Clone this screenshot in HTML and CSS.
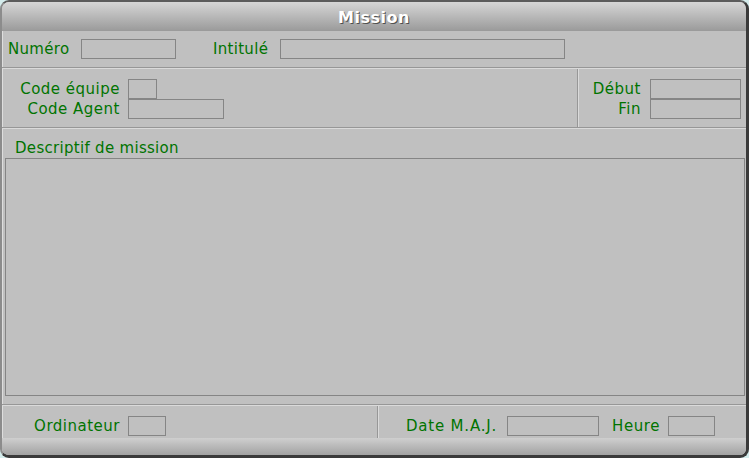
FILE: index.html
```html
<!DOCTYPE html>
<html lang="fr">
<head>
<meta charset="utf-8">
<title>Mission</title>
<link rel="stylesheet" href="styles.css">
</head>
<body>
<div class="window">
  <div class="titlebar">Mission</div>
  <div class="row1">
    <span class="lbl lbl-num">Numéro</span>
    <span class="field f-num"></span>
    <span class="lbl lbl-int">Intitulé</span>
    <span class="field f-int"></span>
  </div>
  <div class="sep"></div>
  <div class="sec2">
    <div class="sec2-left">
      <div class="frow"><span class="lbl rl w118">Code équipe</span><span class="field f-eq"></span></div>
      <div class="frow"><span class="lbl rl w118">Code Agent</span><span class="field f-ag"></span></div>
    </div>
    <div class="vsep"></div>
    <div class="sec2-right">
      <div class="frow"><span class="lbl rl w62">Début</span><span class="field f-date"></span></div>
      <div class="frow"><span class="lbl rl w62">Fin</span><span class="field f-date"></span></div>
    </div>
  </div>
  <div class="sep"></div>
  <div class="sec3">
    <div class="lbl desc-lbl">Descriptif de mission</div>
    <div class="field textarea"></div>
  </div>
  <div class="sep"></div>
  <div class="footer">
    <div class="foot-left">
      <span class="lbl rl w118">Ordinateur</span><span class="field f-ord"></span>
    </div>
    <div class="vsep"></div>
    <div class="foot-right">
      <span class="lbl lbl-maj">Date M.A.J.</span><span class="field f-maj"></span>
      <span class="lbl lbl-heure">Heure</span><span class="field f-heure"></span>
    </div>
  </div>
  <div class="bottombar"></div>
</div>
</body>
</html>
```
FILE: styles.css
```css
html, body {
  margin: 0;
  padding: 0;
  background: #d4ecec;
}
body {
  font-family: "DejaVu Sans", Verdana, sans-serif;
  font-size: 15px;
}
.window {
  box-sizing: border-box;
  width: 749px;
  height: 458px;
  background: #c0c0c0;
  border-top: 2px solid #5c5c5c;
  border-left: 2px solid #8c8c8c;
  border-right: 3px solid #3a3a3a;
  border-bottom: 3px solid #3a3a3a;
  border-radius: 9px;
  overflow: hidden;
  display: flex;
  flex-direction: column;
  box-shadow: inset 1px 0 0 #dedede;
}
.titlebar {
  height: 29px;
  flex: none;
  background: linear-gradient(#d6d6d6, #9a9a9a);
  color: #ffffff;
  font-weight: bold;
  font-size: 16px;
  text-align: center;
  line-height: 31px;
  letter-spacing: 0.5px;
  text-shadow: 1px 1px 0 #505050;
}
.lbl {
  color: #007400;
  letter-spacing: 0.3px;
  line-height: 20px;
  white-space: nowrap;
}
.rl { text-align: right; display: inline-block; letter-spacing: 0.5px; }
.w118 { width: 118px; }
.w62 { width: 62px; }
.field {
  box-sizing: border-box;
  display: inline-block;
  height: 20px;
  border: 1px solid #858585;
  background: #c0c0c0;
  flex: none;
}
.row1 {
  height: 36px;
  flex: none;
  display: flex;
  align-items: center;
}
.lbl-num { display: inline-block; width: 62px; margin-left: 6px; }
.f-num { width: 95px; margin-left: 11px; }
.lbl-int { display: inline-block; width: 57px; margin-left: 37px; }
.f-int { width: 285px; margin-left: 10px; }
.sep {
  height: 2px;
  flex: none;
  box-sizing: border-box;
  border-top: 1px solid #979797;
  border-bottom: 1px solid #dadada;
}
.sec2 {
  height: 58px;
  flex: none;
  display: flex;
}
.sec2-left {
  width: 575px;
  padding-top: 10px;
  box-sizing: border-box;
}
.sec2-right {
  flex: 1;
  padding-top: 10px;
}
.frow {
  display: flex;
  height: 20px;
}
.frow .field { margin-left: 8px; }
.sec2-right .frow .field { margin-left: 9px; }
.f-eq { width: 29px; }
.f-ag { width: 96px; }
.f-date { width: 91px; }
.vsep {
  width: 2px;
  flex: none;
  box-sizing: border-box;
  border-left: 1px solid #979797;
  border-right: 1px solid #dadada;
}
.sec3 {
  height: 275px;
  flex: none;
  box-sizing: border-box;
  padding-top: 10px;
}
.desc-lbl {
  height: 19px;
  line-height: 19px;
  margin-left: 13px;
}
.textarea {
  display: block;
  width: 740px;
  height: 238px;
  margin-left: 3px;
}
.footer {
  height: 32px;
  flex: none;
  display: flex;
}
.foot-left {
  width: 375px;
  box-sizing: border-box;
  padding-top: 10px;
  display: flex;
}
.f-ord { width: 38px; margin-left: 8px; }
.foot-right {
  flex: 1;
  padding-top: 10px;
  padding-left: 27px;
  display: flex;
}
.lbl-maj { display: inline-block; width: 90px; letter-spacing: 0.8px; }
.f-maj { width: 92px; margin-left: 11px; }
.lbl-heure { display: inline-block; width: 48px; margin-left: 13px; letter-spacing: 0.6px; }
.f-heure { width: 47px; margin-left: 8px; }
.bottombar {
  flex: 1;
  background: linear-gradient(#cfcfcf, #a2a2a2);
}
```
